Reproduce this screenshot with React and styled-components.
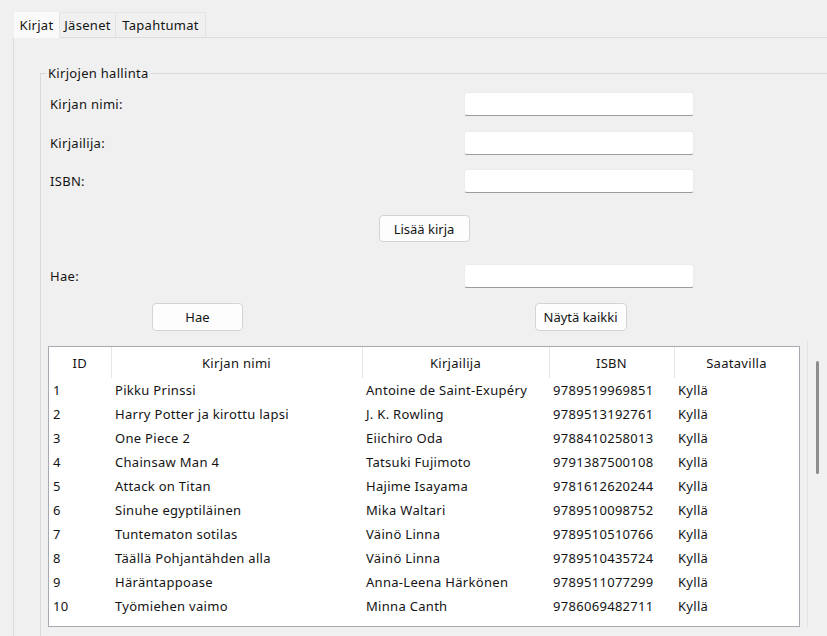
import React from "react";
import styled, { createGlobalStyle } from "styled-components";

const GlobalStyle = createGlobalStyle`
  html, body {
    margin: 0;
    background: #f0f0f0;
  }
  body {
    font-family: "Noto Sans", "Open Sans", sans-serif;
    font-size: 13px;
    letter-spacing: 0.3px;
    color: #141414;
    overflow: hidden;
  }
`

const Window = styled.div`
  width: 827px;
  height: 636px;
  overflow: hidden;
`

const TabStrip = styled.div`
  display: flex;
  padding: 12px 0 0 14px;
`

const Tab = styled.div`
  width: ${p => p.$w}px;
  height: 26px;
  box-sizing: border-box;
  display: flex;
  align-items: center;
  justify-content: center;
  background: ${p => (p.$active ? "#fafafa" : "#f0f0f0")};
  border-top: 1px solid ${p => (p.$active ? "#fafafa" : "#e6e6e6")};
  border-right: 1px solid #e3e3e3;
  border-bottom: 1px solid ${p => (p.$active ? "#fafafa" : "#dcdcdc")};
  white-space: nowrap;
`

const TabFiller = styled.div`
  flex: 1;
  border-bottom: 1px solid #dcdcdc;
`

const TabPane = styled.div`
  margin-left: 13px;
  border-left: 1px solid #dcdcdc;
  padding: 27px 0 0 26px;
`

const Group = styled.fieldset`
  margin: 0;
  padding: 0;
  min-width: 0;
  border: none;
  border-top: 1px solid #d9d9d9;
  border-left: 1px solid #d9d9d9;
`

const Legend = styled.legend`
  margin-left: 5px;
  padding: 0 2px;
  line-height: 16px;
`

const GroupBody = styled.div`
  display: flex;
  padding-bottom: 30px;
`

const Content = styled.div`
  width: 766px;
  flex-shrink: 0;
  padding-top: 11px;
`

const FormRow = styled.div`
  display: grid;
  grid-template-columns: 313px 1fr;
  align-items: center;
  margin-top: ${p => p.$gap || 0}px;
`

const Label = styled.label`
  padding-left: 9px;
`

const Field = styled.input`
  justify-self: center;
  width: 230px;
  height: 24px;
  margin-right: 4px;
  box-sizing: border-box;
  background: #ffffff;
  border: 1px solid #ececec;
  border-bottom: 1px solid #9c9c9c;
  border-radius: 3px;
  font: inherit;
  outline: none;
`

const CenterRow = styled.div`
  display: flex;
  justify-content: center;
  margin-top: ${p => p.$gap || 0}px;
`

const Button = styled.button`
  justify-self: center;
  width: ${p => p.$w || 91}px;
  height: ${p => p.$h || 28}px;
  background: #fdfdfd;
  border: 1px solid #d4d4d4;
  border-radius: 4px;
  font: inherit;
  color: #141414;
  padding: 0;
`

const TableBox = styled.div`
  margin: 15px 7px 0;
  height: 281px;
  box-sizing: border-box;
  border: 1px solid #a7abb1;
  background: #ffffff;
  overflow: hidden;
`

const Table = styled.table`
  width: 750px;
  table-layout: fixed;
  border-collapse: collapse;
`

const HeadCell = styled.th`
  height: 31px;
  padding: 0;
  font-weight: normal;
  text-align: center;
  border-right: 1px solid #e6e6e6;
`

const Cell = styled.td`
  height: 24px;
  padding: 0 0 0 4px;
  white-space: nowrap;
  overflow: hidden;
`

const ScrollTrack = styled.div`
  flex: 1;
  margin-top: 259px;
  border-left: 1px solid #e4e4e4;
  padding: 21px 0 0 8px;
`

const Thumb = styled.div`
  width: 3px;
  height: 113px;
  border-radius: 2px;
  background: #8e8e8e;
`

const columns = [
  { title: "ID", width: 62 },
  { title: "Kirjan nimi", width: 251 },
  { title: "Kirjailija", width: 187 },
  { title: "ISBN", width: 125 },
  { title: "Saatavilla", width: 125 },
]

const books = [
  [1, "Pikku Prinssi", "Antoine de Saint-Exupéry", "9789519969851"],
  [2, "Harry Potter ja kirottu lapsi", "J. K. Rowling", "9789513192761"],
  [3, "One Piece 2", "Eiichiro Oda", "9788410258013"],
  [4, "Chainsaw Man 4", "Tatsuki Fujimoto", "9791387500108"],
  [5, "Attack on Titan", "Hajime Isayama", "9781612620244"],
  [6, "Sinuhe egyptiläinen", "Mika Waltari", "9789510098752"],
  [7, "Tuntematon sotilas", "Väinö Linna", "9789510510766"],
  [8, "Täällä Pohjantähden alla", "Väinö Linna", "9789510435724"],
  [9, "Häräntappoase", "Anna-Leena Härkönen", "9789511077299"],
  [10, "Työmiehen vaimo", "Minna Canth", "9786069482711"],
]

export default function App() {
  return (
    <Window>
      <GlobalStyle />
      <TabStrip>
        <Tab $active $w={46}>Kirjat</Tab>
        <Tab $w={56}>Jäsenet</Tab>
        <Tab $w={90}>Tapahtumat</Tab>
        <TabFiller />
      </TabStrip>
      <TabPane>
        <Group>
          <Legend>Kirjojen hallinta</Legend>
          <GroupBody>
            <Content>
              <FormRow>
                <Label>Kirjan nimi:</Label>
                <Field />
              </FormRow>
              <FormRow $gap={15}>
                <Label>Kirjailija:</Label>
                <Field />
              </FormRow>
              <FormRow $gap={14}>
                <Label>ISBN:</Label>
                <Field />
              </FormRow>
              <CenterRow $gap={22}>
                <Button $h={27}>Lisää kirja</Button>
              </CenterRow>
              <FormRow $gap={22}>
                <Label>Hae:</Label>
                <Field />
              </FormRow>
              <FormRow $gap={15}>
                <Button>Hae</Button>
                <Button $w={92}>Näytä kaikki</Button>
              </FormRow>
              <TableBox>
                <Table>
                  <colgroup>
                    {columns.map(c => (
                      <col key={c.title} style={{ width: c.width }} />
                    ))}
                  </colgroup>
                  <thead>
                    <tr>
                      {columns.map(c => (
                        <HeadCell key={c.title}>{c.title}</HeadCell>
                      ))}
                    </tr>
                  </thead>
                  <tbody>
                    {books.map(([id, name, author, isbn]) => (
                      <tr key={id}>
                        <Cell>{id}</Cell>
                        <Cell>{name}</Cell>
                        <Cell>{author}</Cell>
                        <Cell>{isbn}</Cell>
                        <Cell>Kyllä</Cell>
                      </tr>
                    ))}
                  </tbody>
                </Table>
              </TableBox>
            </Content>
            <ScrollTrack>
              <Thumb />
            </ScrollTrack>
          </GroupBody>
        </Group>
      </TabPane>
    </Window>
  )
}
